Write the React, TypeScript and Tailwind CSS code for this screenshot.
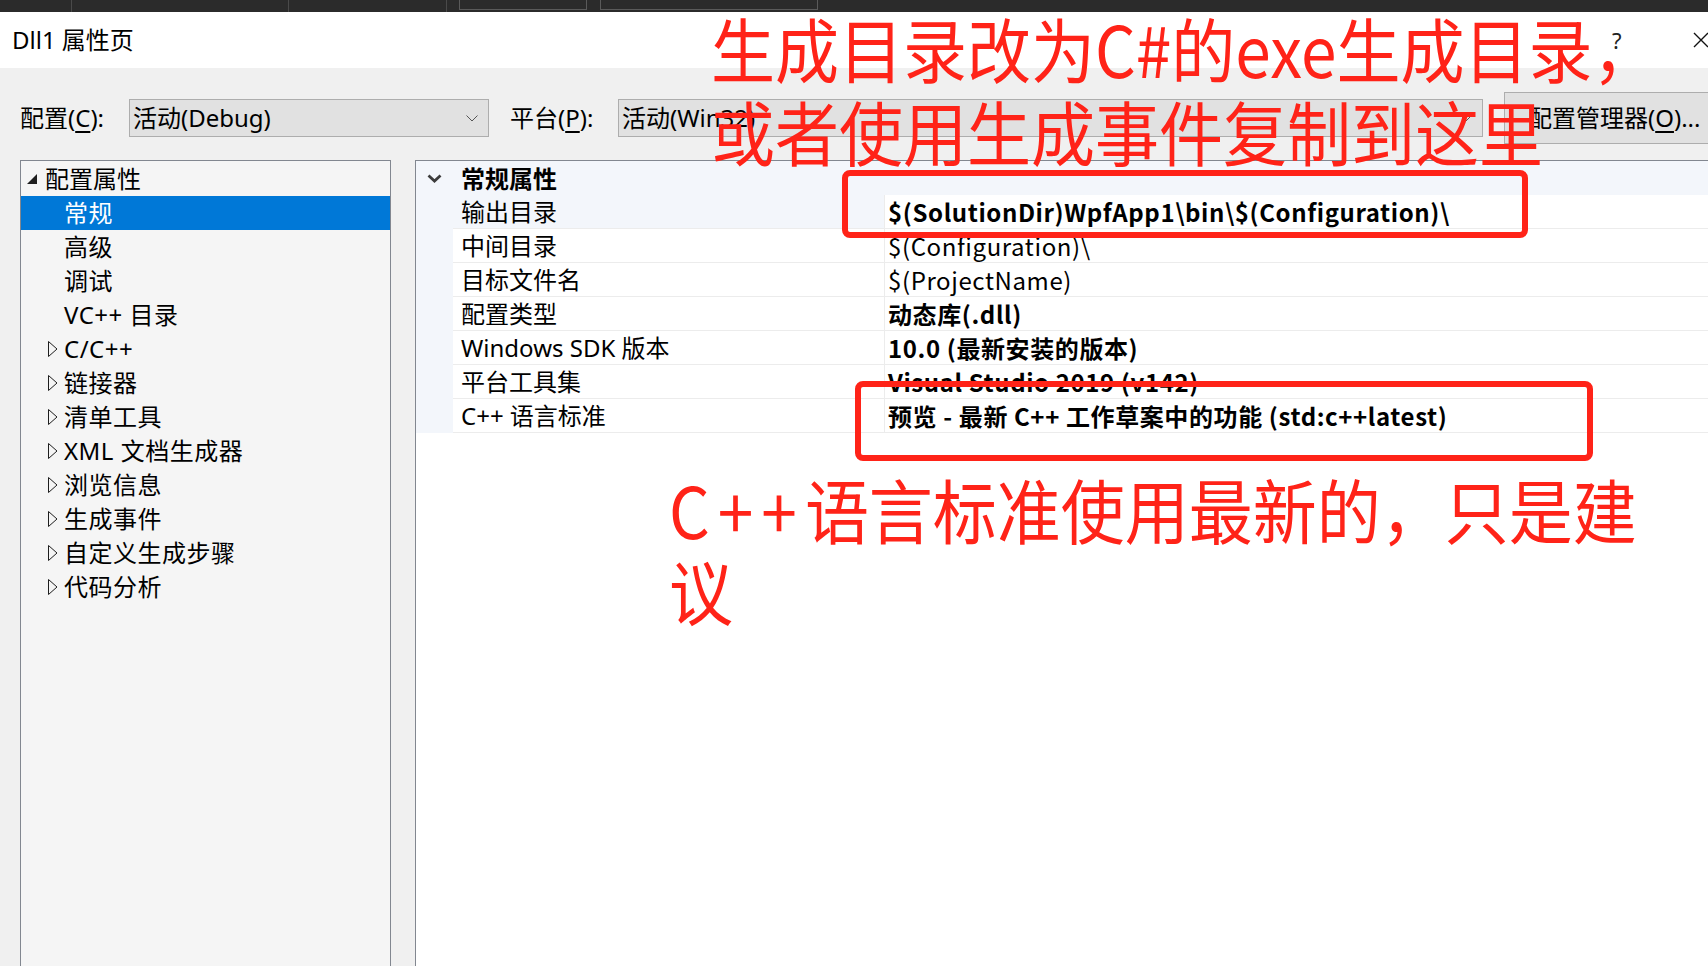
import React from 'react';

const ui = "font-['Noto_Sans','Noto_Sans_CJK_SC',sans-serif]";
const cjk = "font-['Noto_Sans_CJK_SC',sans-serif]";

const treeItems = [
  { label: '常规', selected: true, arrow: false },
  { label: '高级', arrow: false },
  { label: '调试', arrow: false },
  { label: 'VC++ 目录', arrow: false },
  { label: 'C/C++', arrow: true },
  { label: '链接器', arrow: true },
  { label: '清单工具', arrow: true },
  { label: 'XML 文档生成器', arrow: true },
  { label: '浏览信息', arrow: true },
  { label: '生成事件', arrow: true },
  { label: '自定义生成步骤', arrow: true },
  { label: '代码分析', arrow: true },
];

const props = [
  { name: '输出目录', value: '$(SolutionDir)WpfApp1\\bin\\$(Configuration)\\', bold: true, current: true },
  { name: '中间目录', value: '$(Configuration)\\', bold: false },
  { name: '目标文件名', value: '$(ProjectName)', bold: false },
  { name: '配置类型', value: '动态库(.dll)', bold: true },
  { name: 'Windows SDK 版本', value: '10.0 (最新安装的版本)', bold: true },
  { name: '平台工具集', value: 'Visual Studio 2019 (v142)', bold: true },
  { name: 'C++ 语言标准', value: '预览 - 最新 C++ 工作草案中的功能 (std:c++latest)', bold: true },
];

function ComboArrow() {
  return (
    <svg width="12" height="7" viewBox="0 0 12 7" className="shrink-0">
      <path d="M0.5 0.5 L6 6 L11.5 0.5" fill="none" stroke="#555" strokeWidth="1" />
    </svg>
  );
}

function Combo({ text, width }: { text: string; width: string }) {
  return (
    <div className={`${width} shrink-0 h-[38px] bg-[#e1e1e1] border border-[#adadad] flex items-center pl-[3px] pr-[10px]`}>
      <span className="flex-1 text-[24px] text-black whitespace-nowrap">{text}</span>
      <ComboArrow />
    </div>
  );
}

export default function App() {
  return (
    <div className={`relative w-[1708px] h-[966px] overflow-hidden bg-[#f0f0f0] flex flex-col ${ui}`}>
      {/* window strip above the dialog */}
      <div className="h-[12px] bg-[#2b2b2b] flex shrink-0">
        <div className="w-[71px] shrink-0" />
        <div className="w-[217px] shrink-0 border-l border-[#4a4a4a]" />
        <div className="w-[158px] shrink-0 border-l border-[#4a4a4a]" />
        <div className="w-[13px] shrink-0 border-l border-[#4a4a4a]" />
        <div className="w-[128px] shrink-0 h-[10px] border border-t-0 border-[#5a5a5a]" />
        <div className="w-[13px] shrink-0" />
        <div className="w-[218px] shrink-0 h-[10px] border border-t-0 border-[#5a5a5a]" />
      </div>

      {/* title bar */}
      <div className="h-[56px] bg-white flex items-center pl-[12px] shrink-0">
        <span className="text-[24px] text-black flex-1">Dll1 属性页</span>
        <span className="text-[22px] text-[#222] w-[81px]">?</span>
        <svg width="16" height="16" viewBox="0 0 16 16" className="mr-[-1px] shrink-0">
          <path d="M1 1 L15 15 M15 1 L1 15" stroke="#111" strokeWidth="1.4" />
        </svg>
      </div>

      {/* configuration row */}
      <div className="h-[92px] pt-[8px] flex items-center shrink-0 text-[24px] text-black">
        <span className="w-[129px] shrink-0 pl-[20px]">
          配置(<span className="underline underline-offset-4">C</span>):
        </span>
        <Combo text="活动(Debug)" width="w-[360px]" />
        <span className="w-[129px] shrink-0 pl-[21px]">
          平台(<span className="underline underline-offset-4">P</span>):
        </span>
        <Combo text="活动(Win32)" width="w-[865px]" />
        <div className="ml-[21px] w-[230px] h-[52px] shrink-0 bg-[#e1e1e1] border border-[#adadad] flex items-center pl-[23px] whitespace-nowrap">
          配置管理器(<span className="underline underline-offset-4">O</span>)...
        </div>
      </div>

      {/* main area */}
      <div className="flex-1 flex pl-[20px] min-h-0">
        {/* tree */}
        <div className="w-[371px] shrink-0 border border-b-0 border-[#828790] bg-[#f5f5f5] pt-[1px] text-[24px] text-black">
          <div className="h-[34px] flex items-center pl-[6px]">
            <span className="w-[18px]">
              <svg width="10" height="10" viewBox="0 0 10 10">
                <path d="M10 0 L10 10 L0 10 Z" fill="#1e1e1e" />
              </svg>
            </span>
            <span>配置属性</span>
          </div>
          {treeItems.map((item, i) => (
            <div
              key={i}
              className={`h-[34px] flex items-center pl-[27px] ${item.selected ? 'bg-[#0078d7] text-white' : ''}`}
            >
              <span className="w-[16px]">
                {item.arrow && (
                  <svg width="10" height="16" viewBox="0 0 10 16">
                    <path d="M0.5 0.5 L9 8 L0.5 15.5 Z" fill="none" stroke="#1e1e1e" strokeWidth="1" />
                  </svg>
                )}
              </span>
              <span className="whitespace-nowrap tracking-[0.5px]">{item.label}</span>
            </div>
          ))}
        </div>

        {/* property grid */}
        <div className="ml-[24px] flex-1 border-l border-t border-[#828790] bg-white text-[24px] text-black">
          <div className="h-[34px] bg-[#f3f6fb] flex items-center">
            <span className="w-[45px] pl-[11px]">
              <svg width="15" height="9" viewBox="0 0 15 9">
                <path d="M1.5 1.5 L7.5 7 L13.5 1.5" fill="none" stroke="#3c3c3c" strokeWidth="2.8" />
              </svg>
            </span>
            <span className={`${cjk} font-bold`}>常规属性</span>
          </div>
          {props.map((p, i) => (
            <div key={i} className="h-[34px] flex">
              <div className="w-[37px] shrink-0 bg-[#f3f6fb]" />
              <div
                className={`w-[432px] shrink-0 border-r border-b border-[#ececec] flex items-center pl-[8px] whitespace-nowrap ${
                  p.current ? 'bg-[#f3f6fb]' : ''
                }`}
              >
                {p.name}
              </div>
              <div
                className={`flex-1 border-b border-[#ececec] flex items-center pl-[3px] whitespace-nowrap tracking-[0.6px] ${cjk} ${
                  p.bold ? 'font-bold' : 'font-normal'
                }`}
              >
                {p.value}
              </div>
            </div>
          ))}
        </div>
      </div>

      {/* red annotations drawn over the screenshot */}
      <div
        className={`absolute left-[711px] top-[5px] origin-top scale-y-[1.1] text-[64px] leading-[76px] text-[#ff2318] whitespace-nowrap ${cjk}`}
      >
        生成目录改为C#的exe生成目录，
        <br />
        或者使用生成事件复制到这里
      </div>
      <div className="absolute left-[842px] top-[170px] w-[686px] h-[68px] border-[6px] border-[#ff2318] rounded-[8px]" />
      <div className="absolute left-[855px] top-[381px] w-[738px] h-[80px] border-[6px] border-[#ff2318] rounded-[8px]" />
      <div
        className={`absolute left-[669px] top-[467px] origin-top scale-y-[1.1] text-[64px] leading-[74px] text-[#ff2318] whitespace-nowrap ${cjk}`}
      >
        <span className="tracking-[8px]">C++</span>语言标准使用最新的，只是建
        <br />
        议
      </div>
    </div>
  );
}
